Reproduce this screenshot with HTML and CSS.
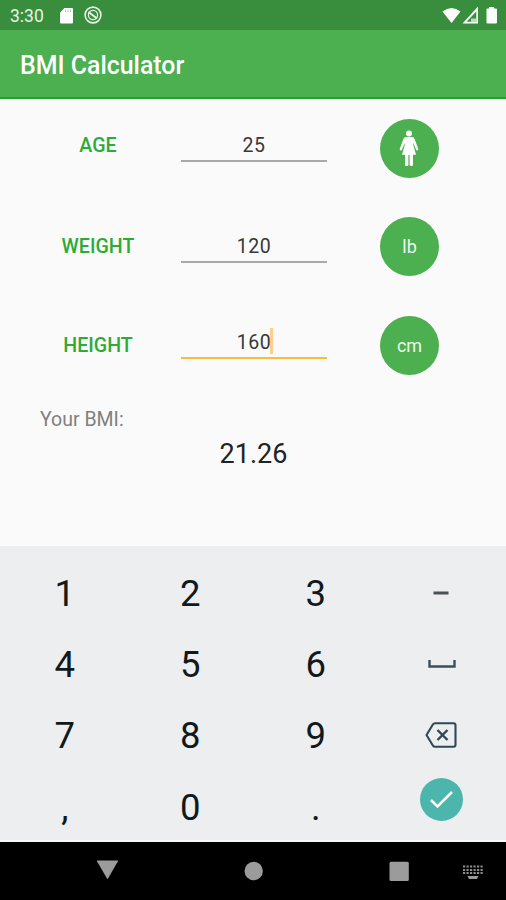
FILE: index.html
```html
<!DOCTYPE html>
<html lang="en">
<head>
<meta charset="utf-8">
<title>BMI Calculator</title>
<link rel="stylesheet" href="styles.css">
</head>
<body>
<div class="screen">
  <div class="status">
    <span class="time">3:30</span>
    <svg class="sd" width="14" height="16" viewBox="0 0 14 16"><path fill="#fff" d="M4.500 0H12Q13 0 13 1V14.500Q13 15.500 12 15.500H1Q0 15.500 0 14.500V4.500Z"/><path stroke="#a5cda7" stroke-width="1" d="M5.500 1.500v2.500M8 1.500v2.500M10.500 1.500v2.500"/></svg>
    <svg class="sync" width="18" height="18" viewBox="0 0 18 18" fill="none" stroke="#e6f3e6"><circle cx="9" cy="9" r="7.900" stroke-width="1.600"/><circle cx="9" cy="9" r="4.600" stroke-width="1.300"/><path stroke-width="1.900" d="M4.500 6l8.500 6.500"/></svg>
    <svg class="signals" width="56" height="18" viewBox="0 0 56 18" fill="#fff"><path d="M.5 5.500Q9.500-1.500 18.500 5.500L9.500 17Z"/><path fill-rule="evenodd" d="M36 .5V17.500H20.500ZM34.300 5.500L24.500 15.800H34.300Z"/><path fill="#b9dcba" d="M29 12.500h5v3.500h-5z"/><path d="M47 1h5v1.500h2q1 0 1 1V16.500q0 1-1 1h-8.500q-1 0-1-1V3.500q0-1 1-1H47z"/></svg>
  </div>
  <header class="bar">BMI Calculator</header>
  <main class="content">
    <div class="row">
      <span class="label">AGE</span>
      <span class="field age">25</span>
      <span class="round"><svg class="woman" width="20" height="36" viewBox="0 0 20 36" fill="#fff"><circle cx="10" cy="3.400" r="3"/><path d="M7 7h6q2 0 2.600 2l3.600 9.800q.3 1.200-.7 1.600-1 .3-1.500-.8L14.300 13v2l2.700 9.800h-3V35q0 1-1.700 1t-1.700-1V25H9.400V35q0 1-1.700 1T6 35V24.800H3L5.700 15v-2L3 19.600q-.5 1.100-1.500.8-1-.4-.7-1.600L4.400 9Q5 7 7 7Z"/></svg></span>
    </div>
    <div class="row">
      <span class="label low">WEIGHT</span>
      <span class="field weight">120</span>
      <span class="round">lb</span>
    </div>
    <div class="row">
      <span class="label low">HEIGHT</span>
      <span class="field height">160<i class="caret"></i></span>
      <span class="round">cm</span>
    </div>
    <div class="caption">Your BMI:</div>
    <div class="result">21.26</div>
  </main>
  <div class="keys">
    <span>1</span><span>2</span><span>3</span>
    <span><svg class="minus" width="16" height="4" viewBox="0 0 16 4"><path fill="#4a5256" d="M.5.500h15v3H.5z"/></svg></span>
    <span>4</span><span>5</span><span>6</span>
    <span><svg class="space" width="28" height="8" viewBox="0 0 28 8"><path fill="none" stroke="#38505a" stroke-width="2.400" d="M1.500 0V6.500H26.500V0"/></svg></span>
    <span>7</span><span>8</span><span>9</span>
    <span><svg class="erase" width="32" height="26" viewBox="0 0 32 26" fill="none" stroke="#2f4852" stroke-width="2.100"><path stroke-linejoin="round" d="M10 1.200H28.500Q30.500 1.200 30.500 3.200V22.800Q30.500 24.800 28.500 24.800H10Q8.800 24.800 8 23.700L1.500 13 8 2.300Q8.800 1.200 10 1.200Z"/><path stroke-width="2.400" d="M12.500 8l10 10M22.500 8l-10 10"/></svg></span>
    <span>,</span><span>0</span><span>.</span>
    <span><b class="done"><svg width="44" height="44" viewBox="0 0 44 44" fill="none" stroke="#fff" stroke-width="2.500"><path d="M12 23l6.500 6.500L33 15"/></svg></b></span>
  </div>
  <nav class="nav">
    <svg width="506" height="58" viewBox="0 0 506 58" fill="#9b9b9b"><path d="M97.500 18.500h20q.8 0 .4.800L108.200 36.300q-.7 1-1.400 0L97 19.300q-.3-.8.500-.8Z"/><circle cx="253.700" cy="29" r="9.200"/><rect x="389.500" y="19.700" width="19.300" height="19.300" rx="1.500"/><path stroke="#8d8d8d" stroke-width="2" stroke-dasharray="2.200 1.300" d="M463 24.500h20M463 28h20M463 31h20"/><path d="M467.500 34h11l-1.500 3h-8z"/></svg>
  </nav>
</div>
</body>
</html>
```

FILE: styles.css
```css
* { box-sizing: border-box; }
body { margin: 0; font-family: Roboto, "Liberation Sans", sans-serif; background: #fafafa; }
svg { display: block; flex: none; }
.screen { width: 506px; height: 900px; display: flex; flex-direction: column; overflow: hidden; }
.status { height: 30px; flex: none; background: #388e3c; color: #e6f3e6; display: flex; align-items: center; padding: 1px 8px 0 10px; }
.time { font-size: 17.5px; width: 50px; line-height: 30px; }
.sync { margin-left: 10px; margin-top: -1px; }
.signals { margin-left: auto; margin-top: -1px; }
.bar { height: 69px; flex: none; background: #4caf50; border-bottom: 2px solid #21a332; color: #fff; font-size: 24.900px; font-weight: 500; line-height: 72px; padding-left: 20px; }
.content { height: 447px; flex: none; padding-top: 20px; }
.row { height: 59px; margin-bottom: 39.300px; display: grid; grid-template-columns: 181px 146px 59px; }
.label { color: #2eaa36; font-weight: 500; font-size: 19.600px; line-height: 53px; text-align: center; padding-left: 15px; }
.low { line-height: 59px; }
.field { border-bottom: 2px solid #a9a9a9; font-size: 19.500px; letter-spacing: .5px; color: #383838; text-align: center; height: 43px; line-height: 54px; }
.weight { height: 46px; line-height: 60px; }
.height { height: 43.500px; line-height: 54px; border-color: #f7be3c; }
.caret { display: inline-block; width: 3px; height: 26px; background: #fdcd8b; vertical-align: -5px; margin: 0 -2px 0 -1px; }
.round { margin-left: 53px; width: 59px; height: 59px; border-radius: 50%; background: #4caf50; color: #eff9ef; font-size: 18px; display: flex; align-items: center; justify-content: center; }
.woman { margin: -1px 2px 0 0; }
.caption { margin: -6px 0 0 40px; font-size: 19.500px; line-height: 24px; color: #808080; }
.result { margin: 6px 0 0 1px; text-align: center; font-size: 27px; line-height: 32px; color: #222; }
.keys { height: 296px; flex: none; background: #eceef0; border-bottom: 2px solid #f7f9fa; padding: 12px 2px 0; display: grid; grid-template-columns: repeat(4, 125.500px); grid-template-rows: repeat(4, 71.200px); color: #11191c; font-size: 36.500px; }
.keys span { display: flex; align-items: center; justify-content: center; }
.minus { margin-top: -1px; }
.space { margin: -2px 0 0 1px; }
.erase { margin-top: -1px; }
.done { width: 43px; height: 43px; border-radius: 50%; background: #4db6ac; margin-top: -16px; display: flex; align-items: center; justify-content: center; }
.nav { height: 58px; flex: none; background: #000; }
```
